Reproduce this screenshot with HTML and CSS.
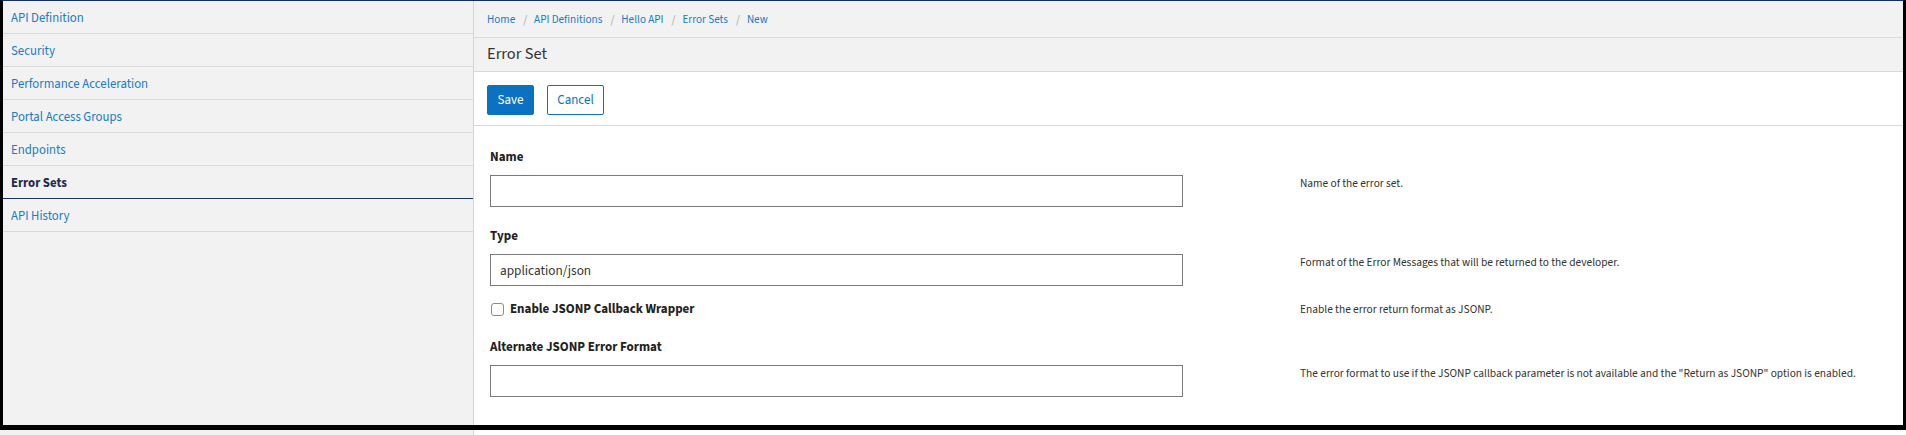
FILE: index.html
```html
<!DOCTYPE html>
<html lang="en">
<head>
<meta charset="utf-8">
<title>Error Set</title>
<link rel="stylesheet" href="styles.css">
</head>
<body>
<div class="screen">
  <div class="frame">
    <aside class="sidebar">
      <nav class="side-nav">
        <a class="side-item" href="#">API Definition</a>
        <a class="side-item" href="#">Security</a>
        <a class="side-item" href="#">Performance Acceleration</a>
        <a class="side-item" href="#">Portal Access Groups</a>
        <a class="side-item" href="#">Endpoints</a>
        <a class="side-item is-active" href="#">Error Sets</a>
        <a class="side-item" href="#">API History</a>
      </nav>
    </aside>
    <main class="main">
      <div class="crumbs">
        <a class="crumb" href="#">Home</a><span class="sep">/</span>
        <a class="crumb" href="#">API Definitions</a><span class="sep">/</span>
        <a class="crumb" href="#">Hello API</a><span class="sep">/</span>
        <a class="crumb" href="#">Error Sets</a><span class="sep">/</span>
        <a class="crumb" href="#">New</a>
      </div>
      <div class="title-bar"><h1 class="title">Error Set</h1></div>
      <div class="actions">
        <button class="btn btn-primary" type="button">Save</button>
        <button class="btn btn-outline" type="button">Cancel</button>
      </div>
      <form class="form">
        <div class="field">
          <div class="control">
            <label class="label" for="name">Name</label>
            <input class="input" id="name" type="text">
          </div>
          <p class="help">Name of the error set.</p>
        </div>
        <div class="field field-gap">
          <div class="control">
            <label class="label" for="type">Type</label>
            <input class="input" id="type" type="text" value="application/json">
          </div>
          <p class="help">Format of the Error Messages that will be returned to the developer.</p>
        </div>
        <div class="field field-check">
          <div class="control">
            <label class="check"><input class="checkbox" type="checkbox"><span>Enable JSONP Callback Wrapper</span></label>
          </div>
          <p class="help help-check">Enable the error return format as JSONP.</p>
        </div>
        <div class="field field-gap">
          <div class="control">
            <label class="label" for="alt">Alternate JSONP Error Format</label>
            <input class="input" id="alt" type="text">
          </div>
          <p class="help">The error format to use if the JSONP callback parameter is not available and the "Return as JSONP" option is enabled.</p>
        </div>
      </form>
    </main>
  </div>
  <div class="below">
    <div class="below-side"></div>
    <div class="below-main"></div>
  </div>
</div>
</body>
</html>
```
FILE: styles.css
```css
* { box-sizing: border-box; }

html, body {
  margin: 0;
  padding: 0;
  background: #ffffff;
}

body {
  font-family: "Source Sans 3", "Lato", "Liberation Sans", sans-serif;
  color: #333333;
  overflow: hidden;
}

.screen {
  width: 1906px;
  height: 435px;
  display: flex;
  flex-direction: column;
}

.frame {
  height: 430px;
  display: flex;
  border-left: 3px solid #000000;
  border-right: 3px solid #000000;
  border-bottom: 5px solid #000000;
  border-top: 1px solid #0f2d66;
  background: #ffffff;
}

/* Sidebar */
.sidebar {
  width: 471px;
  flex: none;
  background: #f2f2f2;
  border-right: 1px solid #d6d6d6;
}

.side-nav {
  display: flex;
  flex-direction: column;
}

.side-item {
  display: block;
  height: 33px;
  line-height: 32px;
  padding: 1px 8px 0;
  font-size: 12.8px;
  color: #1a7bc6;
  text-decoration: none;
  border-bottom: 1px solid #d9d9d9;
}

.side-item.is-active {
  color: #1d2b4e;
  font-weight: 700;
  border-bottom-color: #16336c;
}

/* Main */
.main {
  flex: 1;
  min-width: 0;
  display: flex;
  flex-direction: column;
}

.crumbs {
  height: 37px;
  background: #f2f2f2;
  border-bottom: 1px solid #d9d9d9;
  padding: 1px 13px 0;
  display: flex;
  align-items: center;
  font-size: 11.2px;
  line-height: 36px;
}

.crumb {
  color: #1a7bc6;
  text-decoration: none;
}

.sep {
  color: #a6a6a6;
  padding: 0 7px 0 8px;
}

.title-bar {
  height: 34px;
  background: #f2f2f2;
  border-bottom: 1px solid #d9d9d9;
  padding: 0 13px;
  display: flex;
  align-items: center;
}

.title {
  margin: 0;
  font-size: 16.4px;
  font-weight: 400;
  color: #333333;
  line-height: 33px;
}

.actions {
  height: 54px;
  padding: 13px 13px 0;
  border-bottom: 1px solid #d9d9d9;
  display: flex;
  align-items: flex-start;
  gap: 13px;
}

.btn {
  height: 30px;
  padding: 0;
  font-family: inherit;
  font-size: 13px;
  border-radius: 2px;
  cursor: pointer;
  line-height: 28px;
}

.btn-primary {
  width: 47px;
  background: #0b72c2;
  border: 1px solid #0b72c2;
  color: #ffffff;
}

.btn-outline {
  width: 57px;
  background: #ffffff;
  border: 1px solid #0b72c2;
  color: #0b72c2;
}

/* Form */
.form {
  padding: 22px 16px 0;
  display: flex;
  flex-direction: column;
}

.field {
  display: grid;
  grid-template-columns: 693px 1fr;
  column-gap: 117px;
  align-items: start;
}

.field-gap {
  margin-top: 20px;
}

.field-check {
  margin-top: 14px;
}

.control {
  display: flex;
  flex-direction: column;
}

.label {
  display: block;
  font-size: 13px;
  font-weight: 700;
  color: #222222;
  line-height: 18px;
  margin-bottom: 9px;
}

.input {
  width: 693px;
  height: 32px;
  border: 1px solid #7a7a7a;
  border-radius: 0;
  padding: 0 9px;
  font-family: inherit;
  font-size: 13.3px;
  color: #333333;
  background: #ffffff;
  outline: none;
}

.check {
  display: flex;
  align-items: center;
  gap: 6px;
  height: 18px;
  font-size: 13px;
  font-weight: 700;
  color: #222222;
}

.checkbox {
  appearance: none;
  -webkit-appearance: none;
  width: 13px;
  height: 13px;
  margin: 0 0 0 1px;
  border: 1px solid #8c8c8c;
  border-radius: 3px;
  background: #ffffff;
}

.help {
  margin: 0;
  padding-top: 27px;
  font-size: 11.4px;
  line-height: 17px;
  color: #333333;
}

.help-check {
  padding-top: 1px;
}

/* strip below the frame */
.below {
  height: 5px;
  display: flex;
}

.below-side {
  width: 474px;
  background: #f2f2f2;
  border-right: 1px solid #d6d6d6;
}

.below-main {
  flex: 1;
  background: #ffffff;
}
```
